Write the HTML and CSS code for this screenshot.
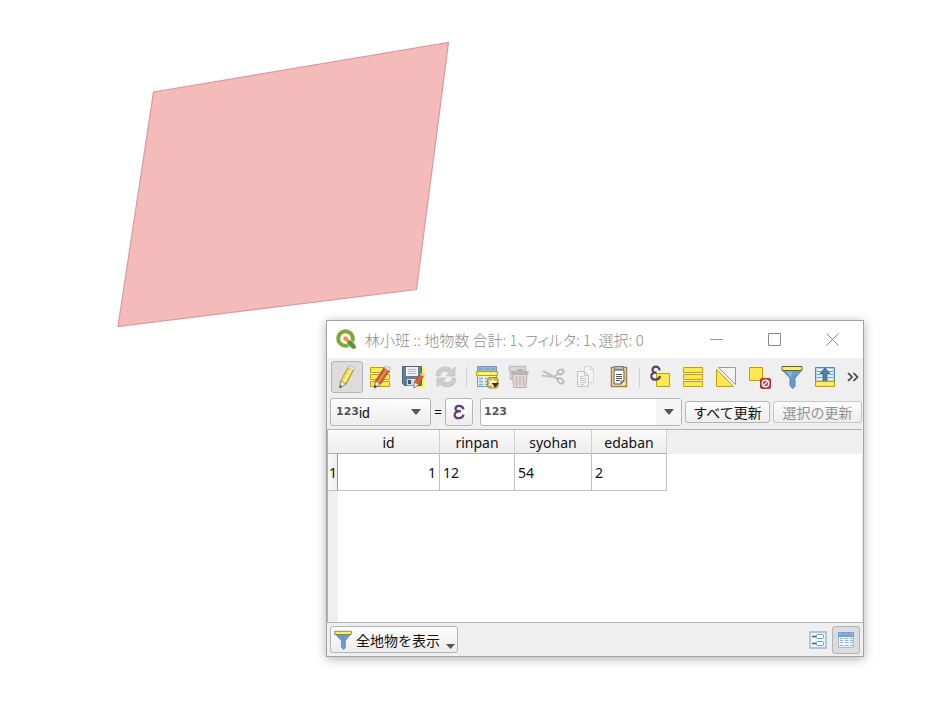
FILE: index.html
```html
<!DOCTYPE html>
<html lang="ja">
<head>
  <meta charset="utf-8">
  <title>林小班 :: 地物数 合計: 1、フィルタ: 1、選択: 0</title>
  <link rel="stylesheet" href="styles.css">
</head>
<body>
  <svg class="map" width="460" height="340" viewBox="0 0 460 340" role="img" aria-label="林小班">
    <polygon points="153.500,92 448.500,42.500 416.500,289.500 118,326.500" fill="#f5baba" stroke="#d99a9d" stroke-width="1.200"/>
  </svg>

  <div class="window">
    <div class="titlebar">
      <svg class="logo" width="20" height="20" viewBox="0 0 20 20">
        <circle cx="9.500" cy="9.500" r="7.300" fill="none" stroke="#7fa832" stroke-width="4"/>
        <path d="M11 11h4l5 5.500V20h-3.500L11 15z" fill="#57963a" stroke="#fff" stroke-width="0.600"/>
        <path d="M7.500 7.500h4v1.500l2 2-2.500 2.500-2-2H7.500z" fill="#ee9345"/>
      </svg>
      <h1>林小班 :: 地物数 合計: 1、フィルタ: 1、選択: 0</h1>
      <button class="win-btn" aria-label="最小化"><svg width="13" height="13"><path d="M0 6.500h13" stroke="#999"/></svg></button>
      <button class="win-btn" aria-label="最大化"><svg width="13" height="13"><path d="M.5.5h12v12H.5z" fill="none" stroke="#888"/></svg></button>
      <button class="win-btn" aria-label="閉じる"><svg width="13" height="13"><path d="M.5.5l12 12M12.500.5l-12 12" stroke="#888"/></svg></button>
    </div>

    <div class="toolbar">
      <button class="tool active" aria-label="編集モード切替">
        <svg width="24" height="24" viewBox="0 0 24 24">
          <path d="M13.500 2l5.500 2-8 15-6 4 .5-7z" fill="#eadb50" stroke="#94893f" stroke-width=".8"/>
          <path d="M16.500 4L8.500 18" stroke="#fff392" stroke-width="1.800"/>
          <path d="M18.500 5L11 19" stroke="#b9a928" stroke-width="1.200"/>
          <path d="M5.500 16l5.500 3-6 4z" fill="#eee9dc" stroke="#777" stroke-width=".7"/>
          <path d="M5 20l2 1.500L4.500 23z" fill="#444"/>
          <path d="M14.500.800l5.300 2-1.300 2.800-5.300-2.500z" fill="#e9e9e9" stroke="#aaa" stroke-width=".6"/>
        </svg>
      </button>
      <button class="tool" aria-label="一括編集">
        <svg width="24" height="24" viewBox="0 0 24 24">
          <path d="M2.500 2.500h19v5h-19zM2.500 9.500h19v5h-19zM2.500 16.500h19v5h-19z" fill="#fce94f" stroke="#c4a000"/>
          <path d="M16.500 2l5 3-9 14-6 4 1-7z" fill="#da6033" stroke="#873c20" stroke-width=".8"/>
          <path d="M18.500 5L10 17.500" stroke="#ef9160" stroke-width="1.500"/>
          <path d="M7.500 16l5 3.200-6 3.800z" fill="#eee9dc" stroke="#777" stroke-width=".7"/>
          <path d="M7 20l2 1.500L6 23z" fill="#333"/>
          <path d="M17.500.800l5.300 3-1.500 2.200-5-3z" fill="#e9e9e9" stroke="#aaa" stroke-width=".6"/>
        </svg>
      </button>
      <button class="tool" aria-label="編集内容を保存">
        <svg width="24" height="24" viewBox="0 0 24 24">
          <path d="M20 2h3.500v21H14v-3h6z" fill="#fff352"/>
          <path d="M1.500 1.500h19v19h-17l-2-2z" fill="#657f91" stroke="#4d6576"/>
          <path d="M5 2h12v9H5z" fill="#eceff1"/>
          <path d="M7 4.500h8M7 6.500h8M7 8.500h8" stroke="#b3bcc2"/>
          <path d="M6 14h9v6.500H6z" fill="#d6dcdf"/><path d="M7 15h3v4H7z" fill="#3f5666"/>
          <path d="M19.500 8.500l3.500 2-5.500 9-4.500 3.500.500-6z" fill="#da6033" stroke="#9b4728" stroke-width=".7"/>
          <path d="M13.500 17.500l4 2-4.500 3.500z" fill="#eee" stroke="#777" stroke-width=".5"/>
          <path d="M20 8l3.500 2-1 1.500-3.500-2z" fill="#ddd" stroke="#aaa" stroke-width=".4"/>
        </svg>
      </button>
      <button class="tool" aria-label="再読み込み" disabled>
        <svg width="24" height="24" viewBox="0 0 24 24">
          <path d="M2 11C2 5 6 2 11 2c3 0 5 1 7 3l3-3v9h-9l3-3C11 5 7 6 6 11z" fill="#cdcdcd" stroke="#c0c0c0" stroke-width=".7"/>
          <path d="M22 13c0 6-4 9-9 9-3 0-5-1-7-3l-3 3v-9h9l-3 3c4 3 8 2 9-3z" fill="#cdcdcd" stroke="#c0c0c0" stroke-width=".7"/>
        </svg>
      </button>
      <span class="separator"></span>
      <button class="tool" aria-label="地物を追加">
        <svg width="24" height="24" viewBox="0 0 24 24">
          <path d="M2.500 1.500h19v20h-19z" fill="#e8f0f7" stroke="#6a9ac8"/>
          <path d="M3 2h18v4H3z" fill="#8fb8de"/>
          <path d="M4 4h4M10 4h4M16 4h4" stroke="#6a9ac8" stroke-width="1.200"/>
          <path d="M4 13.500h4M10 13.500h2M4 16.500h4M10 16.500h2M4 19.500h4M10 19.500h2" stroke="#7fa9cf" stroke-width="1.500"/>
          <path d="M1.500 6.500h21v4h-21z" fill="#fce94f" stroke="#c4a000"/>
          <path d="M4 8.500h5M11 8.500h4M17 8.500h4" stroke="#fff"/>
          <rect x="12.500" y="12.500" width="10.500" height="10.500" rx="2" fill="#d8b535" stroke="#b08f20"/>
          <path d="M17.700 13l1.200 3 3.300-.5-2 2.500 2 2.500-3.300-.5-1.200 3-1.200-3-3.300.5 2-2.500-2-2.500 3.300.5z" fill="#fffbd0"/>
          <path d="M16.500 18h7.500l-3.700 4.500z" fill="#333"/>
        </svg>
      </button>
      <button class="tool" aria-label="選択地物を削除" disabled>
        <svg width="24" height="24" viewBox="0 0 24 24">
          <path d="M1.500 1.500h16v5H1.500zM2.500 8v6h3" fill="#dedada" stroke="#c2bcbc" stroke-width="1.300"/>
          <path d="M4.500 9.500h14.500l-1 13h-12.500z" fill="#e1d7d7" stroke="#b9afb0"/>
          <path d="M3 6h17.500v3.500H3z" fill="#bdb6b7"/><path d="M9 5h6" stroke="#b5afb0" stroke-width="2"/>
          <path d="M8.500 11v10M12 11v10M15.500 11v10" stroke="#c8b8b9" stroke-width="1.500"/>
        </svg>
      </button>
      <button class="tool" aria-label="切り取り" disabled>
        <svg width="24" height="24" viewBox="0 0 24 24">
          <path d="M2 6l16 8.500M.5 10.500l12 1.500 6-4" fill="none" stroke="#c2c2c2" stroke-width="2"/>
          <ellipse cx="19.500" cy="7" rx="3.300" ry="2.200" transform="rotate(-30 19.500 7)" fill="none" stroke="#b9b9b9" stroke-width="1.700"/>
          <ellipse cx="19.500" cy="16" rx="3.300" ry="2.200" transform="rotate(35 19.500 16)" fill="none" stroke="#b9b9b9" stroke-width="1.700"/>
        </svg>
      </button>
      <button class="tool" aria-label="コピー" disabled>
        <svg width="24" height="24" viewBox="0 0 24 24">
          <path d="M10.500 1.500h6l3 3v13h-9z" fill="#f4f4f4" stroke="#d6d6d6"/>
          <path d="M3.500 6.500h7l4 4v11h-11z" fill="#f2f2f2" stroke="#c3c3c3"/>
          <path d="M10.500 6.500v4h4M6 11.500h3M6 13.500h6M6 15.500h6M6 17.500h6M6 19.500h4M16.500 1.500v3h3" fill="none" stroke="#c8c8c8"/>
        </svg>
      </button>
      <button class="tool" aria-label="貼り付け">
        <svg width="24" height="24" viewBox="0 0 24 24">
          <path d="M4.500 2.500h15v19h-15z" fill="#f4e2b2" stroke="#aa8040" stroke-width="1.500"/>
          <path d="M7 5h10v11l-3 3H7z" fill="#fff" stroke="#555"/>
          <path d="M9 9.500h6M9 11.500h6M9 13.500h6M9 15.500h4M14 19v-3h3" fill="none" stroke="#555"/>
          <path d="M7.500 1.500h9v3h-9z" fill="#bbb" stroke="#777"/>
        </svg>
      </button>
      <span class="separator"></span>
      <button class="tool" aria-label="式による選択">
        <svg width="24" height="24" viewBox="0 0 24 24">
          <path d="M8.500 8.500h13v13h-13z" fill="#fce94f" stroke="#c4a000"/>
          <path d="M11.500 5.500C11.500 0 4 1 4.500 5c0 2 2 2.800 4 2.500C4 7.500 2.500 10 3.500 12.500c1.500 3.500 8 2.500 8.500-1.500" fill="none" stroke="#574065" stroke-width="2.200"/>
        </svg>
      </button>
      <button class="tool" aria-label="全て選択">
        <svg width="24" height="24" viewBox="0 0 24 24"><path d="M2.500 2.500h19v5h-19zM2.500 9.500h19v5h-19zM2.500 16.500h19v5h-19z" fill="#fce94f" stroke="#c4a000"/></svg>
      </button>
      <button class="tool" aria-label="選択の反転">
        <svg width="24" height="24" viewBox="0 0 24 24">
          <path d="M4.500 2.500h17v17z" fill="#f3f3f3" stroke="#999"/>
          <path d="M2.500 4.500v17h17z" fill="#fce94f" stroke="#c4a000"/>
        </svg>
      </button>
      <button class="tool" aria-label="選択解除">
        <svg width="24" height="24" viewBox="0 0 24 24">
          <path d="M2.500 2.500h13v13h-13z" fill="#fce94f" stroke="#c4a000"/>
          <rect x="13.500" y="13.500" width="10" height="10" rx="1.500" fill="#d63a3a" stroke="#bd2929"/>
          <circle cx="18.500" cy="18.500" r="3.300" fill="none" stroke="#fff" stroke-width="1.300"/>
          <path d="M16.300 20.700l4.400-4.400" stroke="#fff" stroke-width="1.300"/>
        </svg>
      </button>
      <button class="tool" aria-label="フィルタ">
        <svg width="24" height="24" viewBox="0 0 24 24">
          <path d="M2 5h20l-7 8v8.500l-2.500 2-2.500-3V13z" fill="#6e9ac7" stroke="#48709a" stroke-width=".8"/>
          <path d="M6 6.500h6l-1 6z" fill="#8fb7dc"/>
          <path d="M2 1.500h20v4H2z" fill="#f4ee65" stroke="#66612f"/>
        </svg>
      </button>
      <button class="tool" aria-label="選択行を先頭に移動">
        <svg width="24" height="24" viewBox="0 0 24 24">
          <path d="M2.500 2.500h19v19h-19z" fill="#b9d5ec" stroke="#5787b5"/>
          <path d="M4 5h16M4 8h16M4 11h16M4 14h16" stroke="#f5faff" stroke-width="1.500"/>
          <path d="M4 6.500h4M16 6.500h4M4 9.500h3M17 9.500h3M4 12.500h5M15 12.500h5" stroke="#6f9cc4"/>
          <path d="M12 3l5 5.500h-3v8h-4v-8H7z" fill="#527fa8" stroke="#34597d" stroke-width=".8"/>
          <path d="M2.500 16.500h19v5h-19z" fill="#fce94f" stroke="#c4a000"/><path d="M5 19h5M14 19h5" stroke="#fffbd0"/>
        </svg>
      </button>
      <button class="more" aria-label="その他"><svg width="12" height="10"><path d="M1 1l4 4-4 4M6.500 1l4 4-4 4" fill="none" stroke="#444" stroke-width="1.700"/></svg></button>
    </div>

    <div class="fieldbar">
      <label class="combo field"><span class="type">123</span>
        <select aria-label="フィールド"><option>id</option></select>
        <svg class="arrow" width="10" height="6"><path d="M0 0h10L5 6z" fill="#555"/></svg>
      </label>
      <span class="equals">=</span>
      <button class="expr" aria-label="式ダイアログ">
        <svg width="14" height="16" viewBox="0 0 16 18"><path d="M13 6C12.500 1 4 1 4 5c0 2.500 3 3.500 6 3C5 8 3 10 3 12.500 3 17.500 12.500 17 13 12" fill="none" stroke="#62406f" stroke-width="2.600"/></svg>
      </button>
      <div class="combo value">
        <label class="type" for="expression">123</label>
        <input type="text" id="expression">
        <button class="drop" aria-label="式の履歴"><svg width="10" height="6"><path d="M0 0h10L5 6z" fill="#555"/></svg></button>
      </div>
      <button class="update">すべて更新</button>
      <button class="update" disabled>選択の更新</button>
    </div>

    <div class="grid">
      <table>
        <colgroup><col class="col-row"><col class="col-id"><col class="col-rinpan"><col class="col-syohan"><col class="col-edaban"><col></colgroup>
        <thead>
          <tr><th class="corner"></th><th>id</th><th>rinpan</th><th>syohan</th><th>edaban</th><td class="rest"></td></tr>
        </thead>
        <tbody>
          <tr><th>1</th><td class="num">1</td><td>12</td><td>54</td><td>2</td></tr>
        </tbody>
      </table>
    </div>

    <div class="statusbar">
      <button class="filter">
        <svg width="18" height="20" viewBox="0 0 24 24" preserveAspectRatio="none">
          <path d="M2 5h20l-7 8v8.500l-2.500 2-2.500-3V13z" fill="#6e9ac7" stroke="#48709a" stroke-width=".8"/>
          <path d="M1 1.500h22v4H1z" fill="#f4ee65" stroke="#77713f"/>
        </svg>
        全地物を表示
        <svg class="menu-arrow" width="9" height="5"><path d="M0 0h9L4.500 5z" fill="#555"/></svg>
      </button>
      <button class="view" aria-label="フォームビュー">
        <svg width="18" height="18" viewBox="0 0 18 18">
          <path d="M1 1h16v16H1z" fill="#edf4fa" stroke="#8fb5d9" stroke-width="1.300"/>
          <path d="M3 5.500h4M3 12.500h4" stroke="#555" stroke-width="1.500"/>
          <rect x="7.500" y="3.500" width="7" height="4" rx="1" fill="#fff" stroke="#6b9dce"/>
          <rect x="7.500" y="10.500" width="7" height="4" rx="1" fill="#fff" stroke="#6b9dce"/>
        </svg>
      </button>
      <button class="view active" aria-label="テーブルビュー">
        <svg width="18" height="18" viewBox="0 0 18 18">
          <path d="M1.500 1.500h15v15h-15z" fill="#edf4fa" stroke="#9cbddb"/>
          <path d="M1 1h16v5H1z" fill="#6ea2d3"/>
          <path d="M3 7.500h3M7.500 7.500h4M13 7.500h3M3 9.500h3M7.500 9.500h4M13 9.500h3M3 11.500h3M7.500 11.500h4M13 11.500h3M3 14.500h3M7.500 14.500h4M13 14.500h3" stroke="#9ab6ce"/>
          <path d="M2 3h3M7 3h4M13 3h3" stroke="#a9cbea"/>
        </svg>
      </button>
    </div>
  </div>
</body>
</html>
```

FILE: styles.css
```css
* {
  box-sizing: border-box;
}

body {
  margin: 0;
  min-height: 100vh;
  position: relative;
  background: #fff;
  font-family: "Noto Sans", "Noto Sans CJK JP", sans-serif;
  font-size: 14px;
  color: #111;
}

button,
select,
input {
  font: inherit;
  color: inherit;
  margin: 0;
  padding: 0;
  border: none;
  background: none;
}

svg {
  display: block;
  flex: none;
}

.map {
  max-width: 100%;
}

/* attribute table window, floats over the map */
.window {
  position: absolute;
  left: 326px;
  top: 320px;
  width: 538px;
  border: 1px solid #a3a3a3;
  background: #efefef;
  box-shadow: 0 2px 10px rgba(0, 0, 0, 0.3);
}

.titlebar {
  display: flex;
  align-items: center;
  height: 37px;
  padding: 0 2px 1px 9px;
  background: #fff;
  color: #8c8c8c;
}

.titlebar h1 {
  flex: 1;
  margin: 0 0 0 9px;
  font-family: "Noto Sans CJK JP", sans-serif;
  font-size: 15px;
  font-weight: 300;
  font-feature-settings: "palt";
  white-space: nowrap;
}

.win-btn {
  width: 58px;
  height: 36px;
  display: flex;
  align-items: center;
  justify-content: center;
}

.toolbar {
  display: flex;
  align-items: center;
  gap: 1px;
  height: 38px;
  padding: 0 4px;
}

.tool {
  width: 32px;
  height: 32px;
  display: flex;
  align-items: center;
  justify-content: center;
  border-radius: 3px;
}

.tool.active,
.view.active {
  background: #dcdcdc;
  border: 1px solid #b3b3b3;
}

.separator {
  width: 7px;
  height: 20px;
  background: linear-gradient(#d2d2d2, #d2d2d2) center / 1px 100% no-repeat;
}

.more {
  margin-left: 5px;
}

.fieldbar {
  display: flex;
  align-items: center;
  height: 33px;
  padding: 0 1px 2px 3px;
}

.combo {
  position: relative;
  display: flex;
  align-items: center;
  height: 28px;
  border: 1px solid #b4b4b4;
  border-radius: 3px;
}

.field {
  flex: none;
  width: 101px;
  padding-left: 5px;
  background: linear-gradient(#fdfdfd, #ededed);
}

.type {
  font: bold 11px "DejaVu Sans", sans-serif;
  color: #555;
}

.field select {
  flex: 1;
  min-width: 0;
  height: 26px;
  padding-top: 2px;
  appearance: none;
  font-family: "Liberation Sans", sans-serif;
}

.arrow {
  position: absolute;
  right: 9px;
  top: 10px;
  pointer-events: none;
}

.equals {
  flex: none;
  width: 14px;
  text-align: center;
}

.expr {
  flex: none;
  width: 28px;
  height: 28px;
  display: flex;
  align-items: center;
  justify-content: center;
  border: 1px solid #b4b4b4;
  border-radius: 3px;
  background: linear-gradient(#fdfdfd, #ededed);
}

.value {
  flex: 1;
  min-width: 0;
  margin-left: 7px;
  padding-left: 3px;
  background: #fff;
}

.value input {
  flex: 1;
  min-width: 0;
  height: 26px;
}

.drop {
  flex: none;
  width: 25px;
  height: 26px;
  display: flex;
  align-items: center;
  justify-content: center;
  background: #f5f5f5;
}

.update {
  flex: none;
  height: 22px;
  width: 85px;
  margin-left: 3px;
  border: 1px solid #b4b4b4;
  border-radius: 3px;
  background: linear-gradient(#fdfdfd, #ededed);
  font-family: "Noto Sans CJK JP", sans-serif;
  line-height: 20px;
  white-space: nowrap;
}

.update:disabled {
  width: 89px;
  border-color: #c8c8c8;
  color: #909090;
}

.grid {
  min-height: 193px;
  margin-right: 1px;
  border-top: 1px solid #b4b4b4;
  border-left: 1px solid #b4b4b4;
  background: linear-gradient(to right, #efefef 10px, #fff 10px);
}

table {
  width: 100%;
  table-layout: fixed;
  border-spacing: 0;
}

.col-row {
  width: 10px;
}

.col-id {
  width: 102px;
}

.col-rinpan,
.col-edaban {
  width: 75px;
}

.col-syohan {
  width: 77px;
}

th,
td {
  padding: 0;
  border-right: 1px solid #c0c0c0;
  border-bottom: 1px solid #c0c0c0;
  font-weight: normal;
}

thead th {
  height: 24px;
  padding-top: 2px;
  line-height: 21px;
  border-right-color: #d0d0d0;
  border-bottom-color: #b0b0b0;
  background: linear-gradient(#fafafa, #ededed);
}

thead .corner {
  border-right: none;
}

thead .rest {
  border: none;
  background: #efefef;
}

tbody th {
  text-align: right;
  background: linear-gradient(to right, #fafafa, #ededed);
  border-right-color: #999;
}

tbody td {
  height: 37px;
  padding: 0 3px;
}

.num {
  text-align: right;
}

.statusbar {
  display: flex;
  align-items: center;
  height: 34px;
  padding: 0 3px;
  border-top: 1px solid #b4b4b4;
}

.filter {
  position: relative;
  display: flex;
  align-items: center;
  gap: 4px;
  width: 128px;
  height: 27px;
  margin-right: auto;
  padding-left: 3px;
  border: 1px solid #b4b4b4;
  border-radius: 3px;
  background: linear-gradient(#fdfdfd, #ededed);
  font-family: "Noto Sans CJK JP", sans-serif;
  white-space: nowrap;
}

.menu-arrow {
  position: absolute;
  right: 2px;
  bottom: 3px;
}

.view {
  width: 28px;
  height: 28px;
  display: flex;
  align-items: center;
  justify-content: center;
  border-radius: 3px;
}
```
